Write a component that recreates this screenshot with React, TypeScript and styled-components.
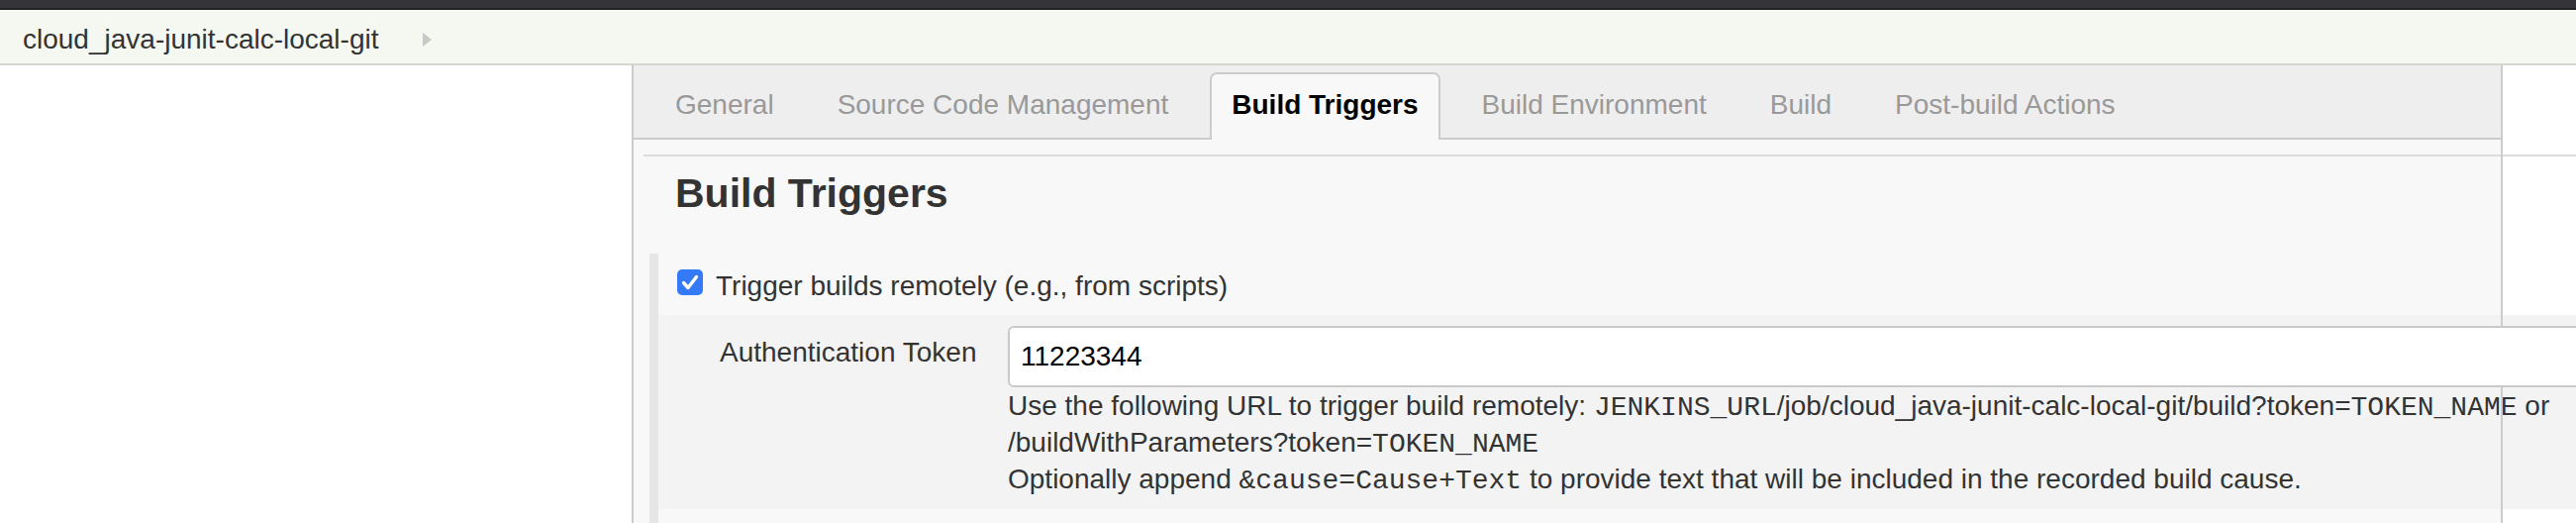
import React from "react";
import styled, { createGlobalStyle } from "styled-components";

const GlobalStyle = createGlobalStyle`
  html, body { margin: 0; padding: 0; overflow: hidden; background: #fff; }
  body { font-family: "Liberation Sans", Arial, Helvetica, sans-serif; }
  * { box-sizing: border-box; }
`;

const Page = styled.div`
  width: 2602px;
  height: 528px;
  overflow: hidden;
  display: flex;
  flex-direction: column;
`;

const TopBar = styled.div`
  height: 10px;
  flex-shrink: 0;
  background: #343439;
  border-bottom: 2px solid #222;
`;

const Breadcrumbs = styled.nav`
  height: 56px;
  flex-shrink: 0;
  background: #f5f8f1;
  border-bottom: 2px solid #d4d6d0;
  display: flex;
  align-items: flex-start;
  padding: 5px 0 0 23px;
`;

const Crumb = styled.div`
  display: flex;
  align-items: center;
  gap: 44px;
  font-size: 28px;
  line-height: 49px;
  color: #333;
`;

const Main = styled.div`
  flex: 1;
  display: flex;
  min-height: 0;
`;

const Sidebar = styled.aside`
  width: 638px;
  flex-shrink: 0;
`;

const Panel = styled.section`
  position: relative;
  width: 1890px;
  flex-shrink: 0;
  background: #f8f8f8;
  border-left: 2px solid #ccc;
  &::after {
    content: "";
    position: absolute;
    top: 0;
    right: 0;
    bottom: 0;
    width: 2px;
    background: #ccc;
    z-index: 1;
  }
`;

const TabBar = styled.div`
  height: 75px;
  background: #eee;
  border-bottom: 2px solid #ccc;
  display: flex;
  align-items: flex-end;
  padding-left: 20px;
`;

const Tab = styled.div<{ $active?: boolean }>`
  flex-shrink: 0;
  height: 68px;
  margin-bottom: -2px;
  margin-right: 20px;
  padding: 11px 20px 0;
  border: 2px solid ${(p) => (p.$active ? "#ccc" : "transparent")};
  border-bottom: none;
  border-radius: 7px 7px 0 0;
  background: ${(p) => (p.$active ? "#f8f8f8" : "transparent")};
  font-size: 28px;
  line-height: 40px;
  white-space: nowrap;
  font-weight: ${(p) => (p.$active ? 700 : 400)};
  color: ${(p) => (p.$active ? "#000" : "#999")};
`;

const Section = styled.div`
  padding-top: 15px;
`;

const Separator = styled.div`
  height: 2px;
  background: #dcdcdc;
  margin-left: 10px;
  margin-right: -90px;
`;

const Heading = styled.h2`
  margin: 13px 0 0 42px;
  font-size: 41px;
  line-height: 48px;
  font-weight: 700;
  color: #333;
`;

const Block = styled.div`
  margin: 37px 0 0 16px;
  border-left: 9px solid #e6e6e6;
  padding: 16px 0 40px 0;
`;

const CheckRow = styled.label`
  display: flex;
  align-items: flex-start;
  gap: 13px;
  padding-left: 19px;
  margin-bottom: 12px;
`;

const CheckBox = styled.span`
  width: 26px;
  height: 26px;
  flex-shrink: 0;
  border-radius: 5px;
  background: #3479f6;
  display: flex;
  align-items: center;
  justify-content: center;
`;

const CheckLabel = styled.span`
  font-size: 28px;
  line-height: 34px;
  color: #333;
`;

const Nested = styled.div`
  display: grid;
  grid-template-columns: 291px 1700px;
  width: max-content;
  padding: 11px 0 12px 62px;
  background: #f3f3f3;
`;

const FieldLabel = styled.div`
  padding-top: 10px;
  font-size: 28px;
  line-height: 34px;
  color: #333;
  white-space: nowrap;
`;

const FieldMain = styled.div`
  display: flex;
  flex-direction: column;
`;

const TokenInput = styled.input`
  position: relative;
  z-index: 2;
  width: 100%;
  height: 62px;
  margin: 0;
  border: 2px solid #c9c9c9;
  border-radius: 6px;
  padding: 0 11px;
  background: #fff;
  font-family: "Liberation Sans", Arial, sans-serif;
  font-size: 28px;
  color: #000;
  outline: none;
`;

const Help = styled.div`
  font-size: 28px;
  line-height: 37px;
  color: #333;
`;

const HelpLine = styled.div`
  white-space: nowrap;
`;

const Code = styled.code`
  font-family: "Liberation Mono", "Courier New", monospace;
  font-size: 28px;
  line-height: 1;
`;

const tabs = [
  "General",
  "Source Code Management",
  "Build Triggers",
  "Build Environment",
  "Build",
  "Post-build Actions",
];

export default function App() {
  return (
    <>
      <GlobalStyle />
      <Page>
        <TopBar />
        <Breadcrumbs>
          <Crumb>
            <span>cloud_java-junit-calc-local-git</span>
            <svg width="9" height="14" viewBox="0 0 9 14">
              <polygon points="0,0 9,7 0,14" fill="#c8c8c8" />
            </svg>
          </Crumb>
        </Breadcrumbs>
        <Main>
          <Sidebar />
          <Panel>
            <TabBar>
              {tabs.map((t) => (
                <Tab key={t} $active={t === "Build Triggers"}>
                  {t}
                </Tab>
              ))}
            </TabBar>
            <Section>
              <Separator />
              <Heading>Build Triggers</Heading>
              <Block>
                <CheckRow>
                  <CheckBox role="checkbox" aria-checked="true">
                    <svg width="26" height="26" viewBox="0 0 26 26">
                      <path
                        d="M6.5 13.5 L11 18.5 L19.5 7.5"
                        fill="none"
                        stroke="#fff"
                        strokeWidth="3.4"
                        strokeLinecap="round"
                        strokeLinejoin="round"
                      />
                    </svg>
                  </CheckBox>
                  <CheckLabel>Trigger builds remotely (e.g., from scripts)</CheckLabel>
                </CheckRow>
                <Nested>
                  <FieldLabel>Authentication Token</FieldLabel>
                  <FieldMain>
                    <TokenInput defaultValue="11223344" />
                    <Help>
                      <HelpLine>
                        <span>Use the following URL to trigger build remotely: </span>
                        <Code>JENKINS_URL</Code>
                        <span>/job/cloud_java-junit-calc-local-git/build?token=</span>
                        <Code>TOKEN_NAME</Code>
                        <span> or</span>
                      </HelpLine>
                      <HelpLine>
                        <span>/buildWithParameters?token=</span>
                        <Code>TOKEN_NAME</Code>
                      </HelpLine>
                      <HelpLine>
                        <span>Optionally append </span>
                        <Code>&amp;cause=Cause+Text</Code>
                        <span> to provide text that will be included in the recorded build cause.</span>
                      </HelpLine>
                    </Help>
                  </FieldMain>
                </Nested>
              </Block>
            </Section>
          </Panel>
        </Main>
      </Page>
    </>
  );
}
